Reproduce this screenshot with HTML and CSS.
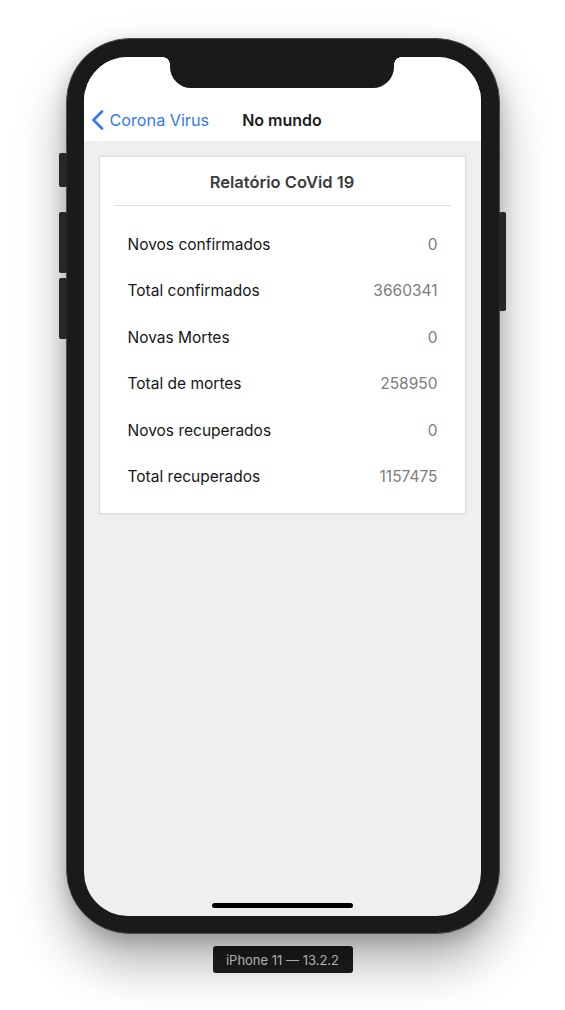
FILE: index.html
```html
<!DOCTYPE html>
<html lang="pt">
<head>
<meta charset="utf-8">
<title>No mundo</title>
<link rel="stylesheet" href="styles.css">
</head>
<body>
<div class="stage">
  <div class="phone">
    <span class="btn btn-silent"></span>
    <span class="btn btn-vol-up"></span>
    <span class="btn btn-vol-down"></span>
    <span class="btn btn-power"></span>
    <div class="screen">
      <div class="notch"></div>
      <header class="nav">
        <div class="nav-row">
          <a class="back">
            <svg class="chev" width="14" height="20" viewBox="0 0 14 20"><path d="M11 1.5 L2.5 10 L11 18.5" fill="none" stroke="#3478f6" stroke-width="2.6" stroke-linecap="round" stroke-linejoin="round"/></svg>
            <span class="back-text">Corona Virus</span>
          </a>
          <div class="nav-title">No mundo</div>
          <div></div>
        </div>
      </header>
      <main class="content">
        <section class="card">
          <h1 class="card-title">Relatório CoVid 19</h1>
          <div class="sep"></div>
          <ul class="rows">
            <li class="row"><span class="label">Novos confirmados</span><span class="value">0</span></li>
            <li class="row"><span class="label">Total confirmados</span><span class="value">3660341</span></li>
            <li class="row"><span class="label">Novas Mortes</span><span class="value">0</span></li>
            <li class="row"><span class="label">Total de mortes</span><span class="value">258950</span></li>
            <li class="row"><span class="label">Novos recuperados</span><span class="value">0</span></li>
            <li class="row"><span class="label">Total recuperados</span><span class="value">1157475</span></li>
          </ul>
        </section>
      </main>
      <div class="home"></div>
    </div>
  </div>
  <div class="device-label">iPhone 11 — 13.2.2</div>
</div>
</body>
</html>
```

FILE: styles.css
```css
* { box-sizing: border-box; }
html, body { margin: 0; padding: 0; background: #ffffff; }
body {
  font-family: "Inter", "Liberation Sans", sans-serif;
  width: 565px;
  height: 1010px;
  overflow: hidden;
}
.stage {
  display: flex;
  flex-direction: column;
  align-items: center;
  padding-top: 38px;
}
.phone {
  position: relative;
  width: 434px;
  height: 896px;
  background: #1a1a1a;
  border-radius: 64px;
  border: 1px solid #4d4d4d;
  padding: 18px 18px 17px 17px;
  box-shadow: 0 28px 50px rgba(0,0,0,0.32), 0 6px 18px rgba(0,0,0,0.18);
}
.btn {
  position: absolute;
  background: #262626;
  width: 8px;
  border-radius: 2px;
}
.btn-silent { left: -8px; top: 114px; height: 34px; }
.btn-vol-up { left: -8px; top: 173px; height: 61px; }
.btn-vol-down { left: -8px; top: 239px; height: 61px; }
.btn-power { right: -7px; top: 173px; height: 99px; width: 7px; }
.screen {
  position: relative;
  width: 100%;
  height: 100%;
  border-radius: 44px;
  background: #efefef;
  overflow: hidden;
  display: flex;
  flex-direction: column;
}
.notch {
  position: absolute;
  top: 0;
  left: 50%;
  width: 224px;
  margin-left: -112px;
  height: 31px;
  background: #1a1a1a;
  border-radius: 0 0 21px 21px;
  z-index: 2;
}
.notch::before, .notch::after {
  content: "";
  position: absolute;
  top: 0;
  width: 7px;
  height: 7px;
}
.notch::before {
  left: -7px;
  background: radial-gradient(circle at 0 100%, transparent 6.5px, #1a1a1a 7px);
}
.notch::after {
  right: -7px;
  background: radial-gradient(circle at 100% 100%, transparent 6.5px, #1a1a1a 7px);
}
.nav {
  background: #ffffff;
  height: 84px;
  display: flex;
  flex-direction: column;
  justify-content: flex-end;
  flex: none;
}
.nav-row {
  height: 42px;
  display: grid;
  grid-template-columns: 1fr auto 1fr;
  align-items: center;
}
.back {
  display: flex;
  align-items: center;
  padding-left: 7px;
  color: #3478f6;
  font-size: 16.2px;
}
.chev { display: block; margin-right: 5px; }
.nav-title {
  font-size: 16px;
  font-weight: 600;
  color: #1c1c1c;
}
.content {
  flex: 1;
  padding: 15px 15px 0 15px;
}
.card {
  background: #ffffff;
  border: 1px solid #dcdcdc;
  box-shadow: 0 0 2px rgba(0,0,0,0.06);
}
.card-title {
  margin: 0;
  padding: 15px 0 13px;
  line-height: 20px;
  text-align: center;
  font-size: 16.5px;
  font-weight: 600;
  color: #3c3c3e;
}
.sep {
  height: 1px;
  background: #dddddd;
  margin: 0 14px;
}
.rows {
  list-style: none;
  margin: 0;
  padding: 15px 27px 13px 28px;
}
.row {
  height: 46.5px;
  display: flex;
  align-items: center;
  justify-content: space-between;
  font-size: 15.5px;
}
.label { color: #161616; }
.value { color: #7d7d7d; }
.home {
  position: absolute;
  bottom: 8px;
  left: 50%;
  width: 141px;
  margin-left: -70.5px;
  height: 5px;
  border-radius: 3px;
  background: #000000;
}
.device-label {
  margin-top: 12px;
  width: 140px;
  height: 27px;
  background: #1c1c1c;
  border-radius: 3px;
  color: #d2d2d2;
  font-size: 13px;
  display: flex;
  align-items: center;
  justify-content: center;
}
```
